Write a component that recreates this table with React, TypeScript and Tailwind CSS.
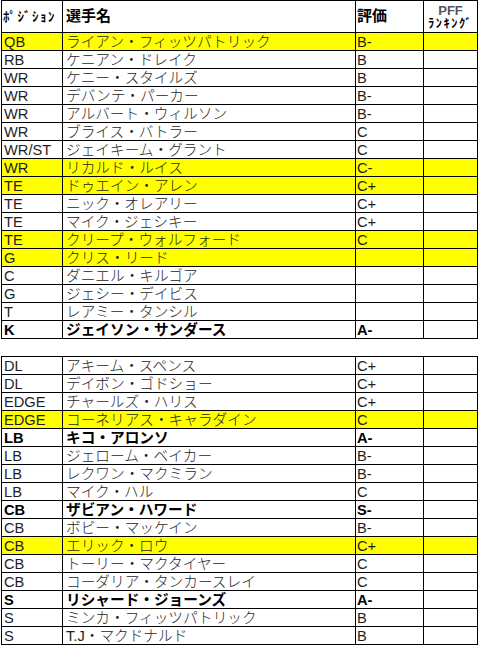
import React from 'react';

type Player = {
  pos: string;
  name: string;
  grade: string;
  hl?: boolean;
  bold?: boolean;
};

const offense: Player[] = [
  { pos: 'QB', name: 'ライアン・フィッツパトリック', grade: 'B-', hl: true },
  { pos: 'RB', name: 'ケニアン・ドレイク', grade: 'B' },
  { pos: 'WR', name: 'ケニー・スタイルズ', grade: 'B' },
  { pos: 'WR', name: 'デバンテ・パーカー', grade: 'B-' },
  { pos: 'WR', name: 'アルバート・ウィルソン', grade: 'B-' },
  { pos: 'WR', name: 'ブライス・バトラー', grade: 'C' },
  { pos: 'WR/ST', name: 'ジェイキーム・グラント', grade: 'C' },
  { pos: 'WR', name: 'リカルド・ルイス', grade: 'C-', hl: true },
  { pos: 'TE', name: 'ドゥエイン・アレン', grade: 'C+', hl: true },
  { pos: 'TE', name: 'ニック・オレアリー', grade: 'C+' },
  { pos: 'TE', name: 'マイク・ジェシキー', grade: 'C+' },
  { pos: 'TE', name: 'クリープ・ウォルフォード', grade: 'C', hl: true },
  { pos: 'G', name: 'クリス・リード', grade: '', hl: true },
  { pos: 'C', name: 'ダニエル・キルゴア', grade: '' },
  { pos: 'G', name: 'ジェシー・デイビス', grade: '' },
  { pos: 'T', name: 'レアミー・タンシル', grade: '' },
  { pos: 'K', name: 'ジェイソン・サンダース', grade: 'A-', bold: true },
];

const defense: Player[] = [
  { pos: 'DL', name: 'アキーム・スペンス', grade: 'C+' },
  { pos: 'DL', name: 'デイボン・ゴドショー', grade: 'C+' },
  { pos: 'EDGE', name: 'チャールズ・ハリス', grade: 'C+' },
  { pos: 'EDGE', name: 'コーネリアス・キャラダイン', grade: 'C', hl: true },
  { pos: 'LB', name: 'キコ・アロンソ', grade: 'A-', bold: true },
  { pos: 'LB', name: 'ジェローム・ベイカー', grade: 'B-' },
  { pos: 'LB', name: 'レクワン・マクミラン', grade: 'B-' },
  { pos: 'LB', name: 'マイク・ハル', grade: 'C' },
  { pos: 'CB', name: 'ザビアン・ハワード', grade: 'S-', bold: true },
  { pos: 'CB', name: 'ボビー・マッケイン', grade: 'B-' },
  { pos: 'CB', name: 'エリック・ロウ', grade: 'C+', hl: true },
  { pos: 'CB', name: 'トーリー・マクタイヤー', grade: 'C' },
  { pos: 'CB', name: 'コーダリア・タンカースレイ', grade: 'C' },
  { pos: 'S', name: 'リシャード・ジョーンズ', grade: 'A-', bold: true },
  { pos: 'S', name: 'ミンカ・フィッツパトリック', grade: 'B' },
  { pos: 'S', name: 'T.J・マクドナルド', grade: 'B' },
];

const cols = 'grid grid-cols-[61px_293px_68px_54px]';
const cell = 'border-r border-b border-black overflow-hidden whitespace-nowrap';

function Row({ p }: { p: Player }) {
  const bg = p.hl ? 'bg-[#ffff00]' : 'bg-white';
  const weight = p.bold ? 'font-bold text-black' : 'font-light text-[#1e1e1e]';
  return (
    <div className={`${cols} h-[18px] ${bg} ${weight} text-[14.67px] leading-[16px]`}>
      <div className={`${cell} flex items-end pl-[2px]`}>{p.pos}</div>
      <div className={`${cell} flex items-end pl-[3px]`}>{p.name}</div>
      <div className={`${cell} flex items-end pl-[1px]`}>{p.grade}</div>
      <div className={cell}></div>
    </div>
  );
}

export default function App() {
  return (
    <div
      className="w-[481px] h-[658px] bg-white pl-[1px]"
      style={{ fontFamily: '"Liberation Sans", "Noto Sans CJK JP", sans-serif' }}
    >
      <div className="w-[477px] border-l border-t border-black">
        <div className={`${cols} h-[32px] text-black`}>
          <div className={`${cell} flex items-center pl-[1px] text-[13px] font-bold tracking-[1.5px]`}>
            ﾎﾟｼﾞｼｮﾝ
          </div>
          <div className={`${cell} flex items-center pl-[3px] text-[15px] font-semibold`}>
            選手名
          </div>
          <div className={`${cell} flex items-center pl-[1px] text-[15px] font-semibold`}>
            評価
          </div>
          <div className={`${cell} flex flex-col items-center justify-center pt-[2px]`}>
            <span className="text-[13px] font-bold leading-[13px] text-[#555]">PFF</span>
            <span className="text-[12.5px] font-semibold leading-[15px] tracking-[1.5px]">ﾗﾝｷﾝｸﾞ</span>
          </div>
        </div>
        {offense.map((p, i) => (
          <Row key={i} p={p} />
        ))}
      </div>

      <div className="w-[477px] mt-[17px] border-l border-t border-black">
        {defense.map((p, i) => (
          <Row key={i} p={p} />
        ))}
      </div>
    </div>
  );
}
